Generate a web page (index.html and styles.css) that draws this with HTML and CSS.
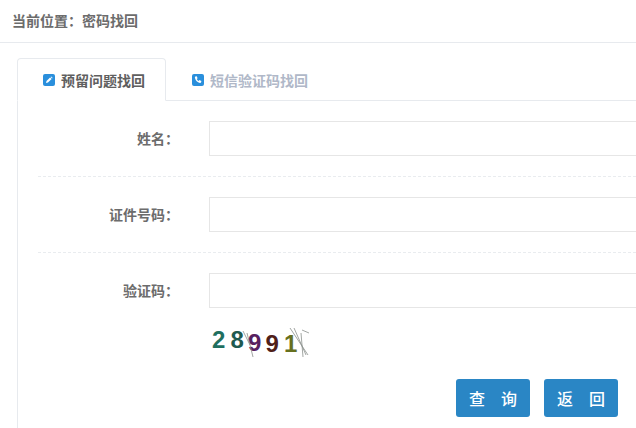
FILE: index.html
```html
<!DOCTYPE html>
<html lang="zh">
<head>
<meta charset="utf-8">
<title>密码找回</title>
<link rel="stylesheet" href="styles.css">
</head>
<body>
<header class="crumb">当前位置：密码找回</header>
<main class="content">
  <nav class="tabs">
    <a class="tab tab-active">
      <svg class="tab-icon" viewBox="0 0 12 12"><rect width="12" height="12" rx="2" fill="#2a8fdc"/><path d="M3 9l.5-2 3.600-3.600 1.500 1.500L5 8.500z" fill="#fff"/><path d="M7.600 2.900l.6-.5 1.400 1.400-.5.600z" fill="#fff"/></svg>
      <span>预留问题找回</span>
    </a>
    <a class="tab">
      <svg class="tab-icon" viewBox="0 0 12 12"><rect width="12" height="12" rx="2" fill="#2a8fdc"/><path d="M3.400 2.600l1.300-.3.900 2-.8.700c.4.900 1 1.500 1.900 1.900l.7-.8 2 .9-.3 1.300c-.2.500-.7.700-1.200.6C5.300 8.400 3.600 6.700 2.900 3.800c-.1-.5.100-1 .5-1.200z" fill="#fff"/></svg>
      <span>短信验证码找回</span>
    </a>
  </nav>
  <form class="panel">
    <div class="row">
      <label class="label">姓名：</label>
      <div class="field"></div>
    </div>
    <div class="row">
      <label class="label">证件号码：</label>
      <div class="field"></div>
    </div>
    <div class="row row-last">
      <label class="label">验证码：</label>
      <div class="field"></div>
    </div>
    <div class="captcha">
      <span class="d d1">2</span><span class="d d2">8</span><span class="d d3">9</span><span class="d d4">9</span><span class="d d5">1</span>
      <svg class="noise" viewBox="0 0 101 33"><path d="M38 8l6 24M34 6l7 14M81 3l18 27M85 3l12 27M92 8l2 24M93 5l7 3" stroke="#8a8f8c" stroke-width=".8" fill="none"/></svg>
    </div>
    <div class="actions">
      <button type="button" class="btn">查　询</button>
      <button type="button" class="btn">返　回</button>
    </div>
  </form>
</main>
</body>
</html>
```
FILE: styles.css
```css
html, body {
  margin: 0;
  padding: 0;
  height: 428px;
  overflow: hidden;
  background: #fff;
  font-family: "Noto Sans CJK SC", "Liberation Sans", sans-serif;
}
.crumb {
  box-sizing: border-box;
  height: 43px;
  line-height: 40px;
  padding-left: 12px;
  border-bottom: 1px solid #e7eaee;
  font-size: 14px;
  font-weight: 700;
  color: #6c6c6c;
}
.content {
  padding: 15px 0 0 17px;
}
.tabs {
  display: flex;
  height: 42px;
  border-bottom: 1px solid #e7eaee;
}
.tab {
  box-sizing: border-box;
  height: 43px;
  width: 149px;
  display: flex;
  align-items: center;
  gap: 6px;
  padding-left: 26px;
  font-size: 14px;
  font-weight: 700;
  color: #b0b8c8;
}
.tab-active {
  padding-left: 25px;
  color: #5f5f5f;
  background: #fff;
  border: 1px solid #e7eaee;
  border-bottom-color: #fff;
  border-radius: 4px 4px 0 0;
}
.tab-icon {
  width: 12px;
  height: 12px;
  flex: none;
}
.panel {
  box-sizing: border-box;
  border-left: 1px solid #e7eaee;
  height: 327px;
  padding: 20px 0 0 20px;
}
.row {
  display: flex;
  align-items: center;
  height: 35px;
  padding-bottom: 20px;
  margin-bottom: 20px;
  border-bottom: 1px dashed #e9ecef;
}
.row-last {
  border-bottom: 0;
  margin-bottom: 0;
}
.label {
  box-sizing: border-box;
  width: 171px;
  padding-right: 30px;
  text-align: right;
  font-size: 14px;
  font-weight: 700;
  color: #6c6c6c;
  position: relative;
  top: -1px;
}
.field {
  box-sizing: border-box;
  flex: 1;
  height: 35px;
  border: 1px solid #e6e6e6;
  border-right: 0;
  background: #fff;
}
.captcha {
  position: relative;
  box-sizing: border-box;
  display: flex;
  width: 101px;
  height: 33px;
  margin: -3px 0 0 171px;
  padding-left: 3px;
  gap: 4px;
  font-family: "Liberation Sans", sans-serif;
  font-size: 24px;
  font-weight: 700;
  line-height: 30px;
}
.d { display: block; width: 13.5px; text-align: center; }
.d1 { color: #1f6f5f; }
.d2 { color: #1f5a50; margin-left: 1px; }
.d3 { color: #57205f; transform: translateY(3px); }
.d4 { color: #4f2018; transform: translateY(4px); }
.d5 { color: #66701f; transform: translateY(4px); margin-left: 1px; }
.noise {
  position: absolute;
  inset: 0;
  width: 101px;
  height: 33px;
}
.actions {
  display: flex;
  gap: 14px;
  margin: 21px 0 0 418px;
}
.btn {
  width: 74px;
  height: 38px;
  padding: 0;
  border: 0;
  border-radius: 3px;
  background: #2a86c5;
  color: #fff;
  font-family: "Noto Sans CJK SC", sans-serif;
  font-size: 16px;
  font-weight: 500;
}
```
